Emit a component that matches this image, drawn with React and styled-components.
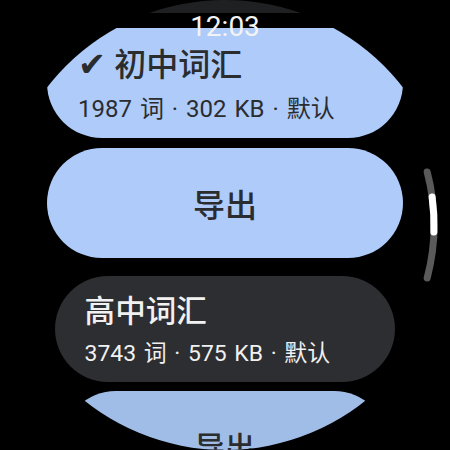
import React from 'react';
import styled, { createGlobalStyle } from 'styled-components';

const GlobalStyle = createGlobalStyle`
	html, body {
		margin: 0;
		padding: 0;
		background: #000;
	}
	body {
		font-family: Roboto, 'Noto Sans CJK SC', 'DejaVu Sans', sans-serif;
	}
`;

const decks = [
	{ id: 'junior', name: '初中词汇', words: 1987, size: '302 KB', tag: '默认', selected: true },
	{ id: 'senior', name: '高中词汇', words: 3743, size: '575 KB', tag: '默认', selected: false },
];

const ScrollIndicator = () => (
	<IndicatorSvg width="450" height="450" viewBox="0 0 450 450">
		<path d="M427.2 172 A209 209 0 0 1 427.2 278" stroke="#5a5a5a" strokeWidth="7" strokeLinecap="round" fill="none" />
		<path d="M432.1 197 A209 209 0 0 1 433.9 232" stroke="#ffffff" strokeWidth="7" strokeLinecap="round" fill="none" />
	</IndicatorSvg>
);

const DeckCard = ({ deck, width, height, gapTop, scale }) => (
	<Card $width={width} $height={height} $gapTop={gapTop} $selected={deck.selected} $pad={31 * scale}>
		<Title $size={32 * scale}>
			{deck.selected && <Check>✔</Check>}
			{deck.name}
		</Title>
		<Meta $size={24 * scale}>
			{deck.words} 词 · {deck.size} · {deck.tag}
		</Meta>
	</Card>
);

export default function App() {
	return (
		<>
			<GlobalStyle />
			<Screen>
				<TopBand />
				<Clock>12:03</Clock>
				<List>
					<DeckCard deck={decks[0]} width={356} height={110} gapTop={0} scale={1} />
					<ActionButton $width={356} $height={110} $gapTop={10} $size={32}>
						导出
					</ActionButton>
					<DeckCard deck={decks[1]} width={340} height={106} gapTop={18} scale={0.955} />
					<ActionButton $width={326} $height={108} $gapTop={9} $size={30} $dim>
						导出
					</ActionButton>
				</List>
				<ScrollIndicator />
			</Screen>
		</>
	);
}

const Screen = styled.div`
	position: relative;
	width: 450px;
	height: 450px;
	border-radius: 50%;
	overflow: hidden;
	background: #000;
`;

const TopBand = styled.div`
	position: absolute;
	top: 0;
	left: 0;
	right: 0;
	height: 13px;
	background: #1f2021;
	z-index: 1;
`;

const Clock = styled.div`
	position: absolute;
	top: 13px;
	left: 0;
	right: 0;
	text-align: center;
	font-family: Roboto, sans-serif;
	font-size: 28px;
	line-height: 28px;
	color: #f3f3f3;
	z-index: 2;
`;

const List = styled.div`
	display: flex;
	flex-direction: column;
	align-items: center;
	padding-top: 28px;
`;

const Card = styled.div`
	box-sizing: border-box;
	flex-shrink: 0;
	width: ${(p) => p.$width}px;
	height: ${(p) => p.$height}px;
	margin-top: ${(p) => p.$gapTop}px;
	border-radius: ${(p) => p.$height / 2}px;
	padding-left: ${(p) => p.$pad}px;
	padding-top: 4px;
	display: flex;
	flex-direction: column;
	justify-content: center;
	gap: 8px;
	background: ${(p) => (p.$selected ? '#aecbfa' : '#2d2e31')};
	color: ${(p) => (p.$selected ? '#2b2c2e' : '#f1f1f1')};
`;

const Title = styled.div`
	font-size: ${(p) => p.$size}px;
	line-height: 1.25;
	font-weight: 500;
	white-space: nowrap;
`;

const Check = styled.span`
	font-family: 'DejaVu Sans', sans-serif;
	font-size: 1.05em;
	margin-right: 8px;
`;

const Meta = styled.div`
	font-size: ${(p) => p.$size}px;
	line-height: 1.3;
	word-spacing: 2px;
	white-space: nowrap;
`;

const ActionButton = styled.div`
	flex-shrink: 0;
	width: ${(p) => p.$width}px;
	height: ${(p) => p.$height}px;
	margin-top: ${(p) => p.$gapTop}px;
	border-radius: ${(p) => p.$height / 2}px;
	display: flex;
	align-items: center;
	justify-content: center;
	background: ${(p) => (p.$dim ? '#a0bde8' : '#aecbfa')};
	color: #2b2c2e;
	font-size: ${(p) => p.$size}px;
	font-weight: 500;
`;

const IndicatorSvg = styled.svg`
	position: absolute;
	top: 0;
	left: 0;
	pointer-events: none;
`;
